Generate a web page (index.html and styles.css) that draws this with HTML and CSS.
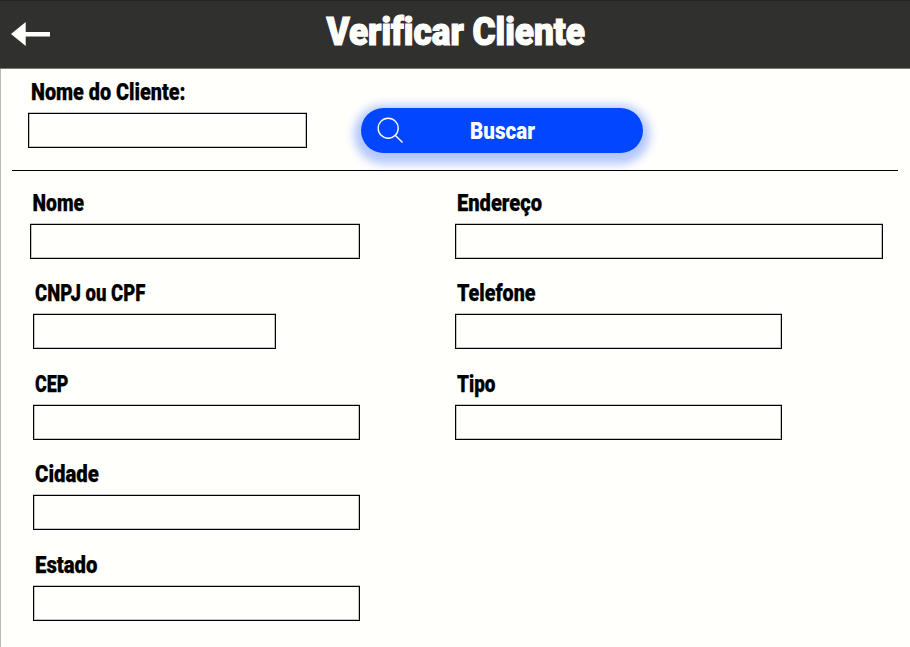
FILE: index.html
```html
<!DOCTYPE html>
<html lang="pt-BR">
<head>
<meta charset="utf-8">
<title>Verificar Cliente</title>
<link rel="stylesheet" href="styles.css">
</head>
<body>
<header class="header">
  <svg class="back" viewBox="0 0 40 26"><path d="M0 13 14.7 1v10H39v4.4H14.7V25z"/></svg>
  <svg class="title" role="heading" viewBox="0 0 260 45"><text x="0.5" y="35.6" textLength="258.5" lengthAdjust="spacingAndGlyphs">Verificar Cliente</text></svg>
</header>
<main class="page">
  <form class="search">
    <label class="field">
      <svg class="label"><text x="3" y="18.6" textLength="154.5" lengthAdjust="spacingAndGlyphs">Nome do Cliente:</text></svg>
      <input class="box box-search" type="text">
    </label>
    <button class="button" type="button">
      <svg class="lens" viewBox="0 0 28 28"><circle cx="11.2" cy="11.2" r="10"/><path d="m18.2 18.2 7.3 7.3"/></svg>
      <svg class="caption"><text x="0" y="19" textLength="65" lengthAdjust="spacingAndGlyphs">Buscar</text></svg>
    </button>
  </form>
  <hr class="rule">
  <section class="columns">
    <div class="column">
      <label class="field first">
        <svg class="label"><text x="2.5" y="18.6" textLength="51.5" lengthAdjust="spacingAndGlyphs">Nome</text></svg>
        <input class="box box-name" type="text">
      </label>
      <label class="field">
        <svg class="label"><text x="2" y="18.6" textLength="110.5" lengthAdjust="spacingAndGlyphs">CNPJ ou CPF</text></svg>
        <input class="box box-document" type="text">
      </label>
      <label class="field">
        <svg class="label"><text x="2" y="18.6" textLength="33.5" lengthAdjust="spacingAndGlyphs">CEP</text></svg>
        <input class="box" type="text">
      </label>
      <label class="field">
        <svg class="label"><text x="2" y="18.6" textLength="64" lengthAdjust="spacingAndGlyphs">Cidade</text></svg>
        <input class="box" type="text">
      </label>
      <label class="field">
        <svg class="label"><text x="2" y="18.6" textLength="62.5" lengthAdjust="spacingAndGlyphs">Estado</text></svg>
        <input class="box" type="text">
      </label>
    </div>
    <div class="column">
      <label class="field">
        <svg class="label"><text x="2" y="18.6" textLength="85" lengthAdjust="spacingAndGlyphs">Endereço</text></svg>
        <input class="box box-address" type="text">
      </label>
      <label class="field">
        <svg class="label"><text x="2" y="18.6" textLength="78.5" lengthAdjust="spacingAndGlyphs">Telefone</text></svg>
        <input class="box" type="text">
      </label>
      <label class="field">
        <svg class="label"><text x="2" y="18.6" textLength="38.5" lengthAdjust="spacingAndGlyphs">Tipo</text></svg>
        <input class="box" type="text">
      </label>
    </div>
  </section>
</main>
</body>
</html>
```
FILE: styles.css
```css
* { box-sizing: border-box; }
body {
  margin: 0;
  height: 647px;
  overflow: hidden;
  background: #fffffc;
  font-family: Roboto, "Liberation Sans", sans-serif;
}
svg { display: block; overflow: visible; }
.header {
  display: grid;
  grid-template-columns: 326px 260px;
  height: 69px;
  padding-top: 8px;
  background: #30302e;
  border-top: 1px solid #232322;
  border-bottom: 1px solid #777775;
}
.back { width: 40px; height: 26px; margin: 12px 0 0 11px; fill: #fffffc; }
.title {
  width: 260px;
  height: 45px;
  fill: #fffffc;
  stroke: #fffffc;
  stroke-width: 1.2px;
  font-size: 38px;
  font-weight: 900;
  font-variant-ligatures: none;
}
.page { height: 578px; border-left: 1px solid #b8b8b6; }
.search { display: flex; height: 101px; padding: 12px 0 0 27px; }
.label {
  width: 200px;
  height: 25px;
  margin-bottom: 7px;
  fill: #000;
  stroke: #000;
  stroke-width: .25px;
  font-size: 23.2px;
  font-weight: 900;
}
.field { display: block; height: 90.6px; }
.box {
  display: block;
  width: 327px;
  height: 35px;
  margin: 0;
  padding: 0 8px;
  border: 1px solid #000;
  border-radius: 0;
  outline: 0;
  background: transparent;
  box-shadow: 0 -1px #c4c4c4, inset 1px 0 #c4c4c4, inset -1px 0 #c4c4c4, inset 0 -1px #c4c4c4;
  font: 18px Roboto, sans-serif;
}
.box-search { width: 279px; }
.box-name { width: 330px; }
.box-document { width: 243px; }
.box-address { width: 428px; }
.button {
  display: flex;
  align-items: center;
  width: 282px;
  height: 45px;
  margin: 27px 0 0 54px;
  padding: 0 0 0 16px;
  border: 0;
  border-radius: 23px;
  background: #0346ff;
  box-shadow: 0 4px 10px 7px rgba(3, 70, 255, .3);
}
.lens { width: 28px; height: 28px; fill: none; stroke: #fff; stroke-width: 1.4px; }
.caption {
  width: 66px;
  height: 25px;
  margin: 3px 0 0 65px;
  fill: #fff;
  font: 900 23.2px Roboto, sans-serif;
}
.rule {
  position: relative;
  width: 886px;
  height: 1px;
  margin: 0 0 0 11px;
  border: 0;
  background: #000;
}
.columns { display: grid; grid-template-columns: 422px 429px; padding: 20.6px 0 0 32px; }
.first { margin-left: -3px; }
```
